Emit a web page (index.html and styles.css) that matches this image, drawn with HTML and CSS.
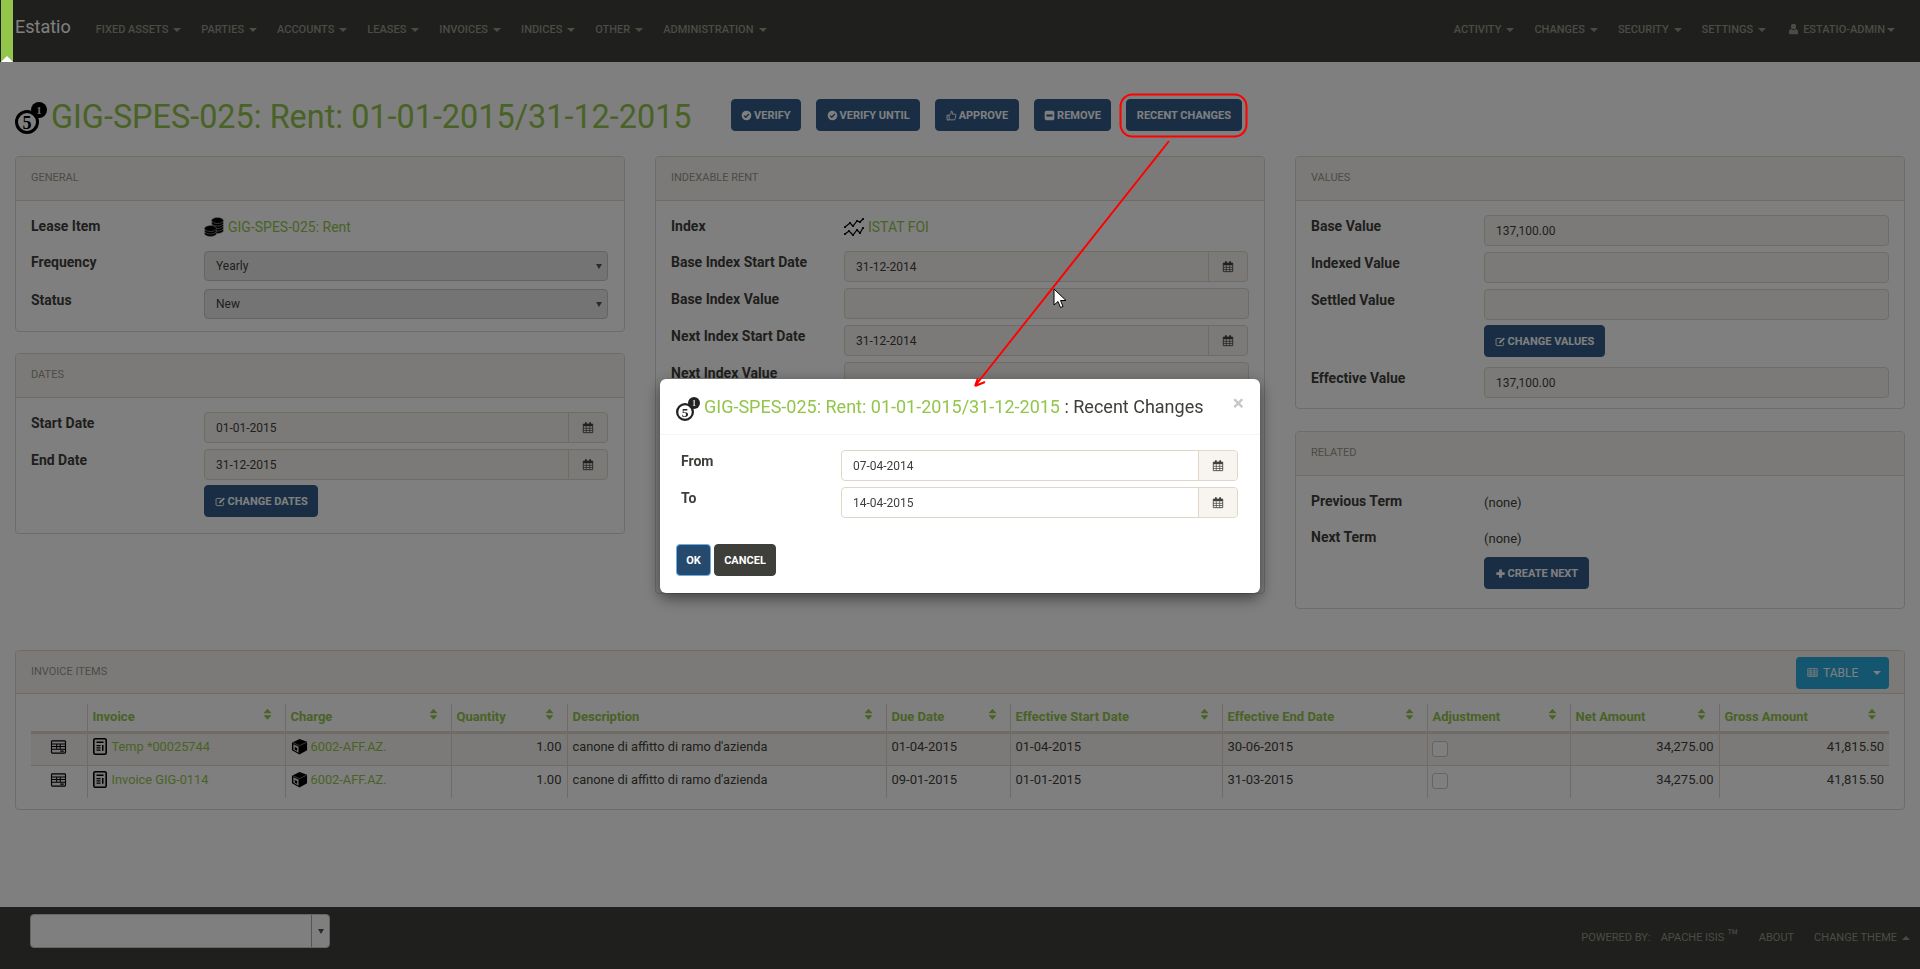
FILE: index.html
```html
<!DOCTYPE html>
<html lang="en">
<head>
    <meta charset="UTF-8">
    <meta name="viewport" content="width=device-width, initial-scale=1.0">
    <title>GIG-SPES-025: Rent: 01-01-2015/31-12-2015</title>
    <link rel="stylesheet" href="styles.css">
</head>
<body>

<svg class="sprite" xmlns="http://www.w3.org/2000/svg">
    <symbol id="i-term" viewBox="0 0 32 32">
        <circle cx="12" cy="20" r="10.500" fill="#fff" fill-opacity=".6" stroke="currentColor" stroke-width="3"/>
        <text x="12" y="26.500" font-family="Liberation Serif, serif" font-weight="700" font-size="18" text-anchor="middle" fill="currentColor">5</text>
        <circle cx="24" cy="8" r="8" fill="currentColor"/>
        <text x="24" y="12" font-family="Liberation Serif, serif" font-weight="700" font-size="11" text-anchor="middle" fill="#ddd">1</text>
    </symbol>
    <symbol id="i-check" viewBox="0 0 16 16">
        <circle cx="8" cy="8" r="7" fill="currentColor"/>
        <path d="M4.500 8.200l2.400 2.400 4.600-4.800" fill="none" stroke="#325d88" stroke-width="2"/>
    </symbol>
    <symbol id="i-thumb" viewBox="0 0 16 16">
        <path d="M1.500 7.500h3v7h-3zM4.500 8l3-3.500V1.500c1.800 0 2.300 1.600 1.600 4.500h4c1 0 1.400.7 1.200 1.600l-1.100 5.300c-.2.8-.7 1.400-1.500 1.400H4.500" fill="none" stroke="currentColor" stroke-width="1.400"/>
    </symbol>
    <symbol id="i-minus" viewBox="0 0 16 16">
        <rect x="1" y="1" width="14" height="14" rx="2.500" fill="currentColor"/>
        <rect x="3.500" y="6.500" width="9" height="3" fill="#325d88"/>
    </symbol>
    <symbol id="i-edit" viewBox="0 0 16 16">
        <path d="M12.500 9.500v3c0 1-.7 1.500-1.500 1.500H3c-.9 0-1.500-.6-1.500-1.500V5c0-.9.6-1.500 1.500-1.500h6" fill="none" stroke="currentColor" stroke-width="1.400"/>
        <path d="M6 8.500l6.500-6.500 2 2L8 10.500H6z" fill="currentColor"/>
    </symbol>
    <symbol id="i-plus" viewBox="0 0 16 16">
        <path d="M6 2h4v4h4v4h-4v4H6v-4H2V6h4z" fill="currentColor"/>
    </symbol>
    <symbol id="i-cal" viewBox="0 0 14 14">
        <path d="M1.500 3h11v10h-11z" fill="none" stroke="currentColor"/>
        <path d="M1.500 3h11v2.500h-11z" fill="currentColor"/>
        <path d="M3.500 1h2v3h-2zM8.500 1h2v3h-2z" fill="currentColor"/>
        <path d="M1.500 8h11M1.500 10.500h11M5 5.500V13M9 5.500V13" fill="none" stroke="currentColor" stroke-width=".8"/>
    </symbol>
    <symbol id="i-user" viewBox="0 0 12 16">
        <circle cx="6" cy="4.500" r="3.500" fill="currentColor"/>
        <path d="M1 15c-.6 0-1-.4-1-1v-2.500C0 9.500 1.500 8 3 8l3 1.500L9 8c1.500 0 3 1.500 3 3.500V14c0 .6-.4 1-1 1z" fill="currentColor"/>
    </symbol>
    <symbol id="i-table" viewBox="0 0 14 14">
        <path d="M1 2h12v10H1zM1 5h12M1 7.500h12M1 10h12M4.800 2v10M9.200 2v10" fill="none" stroke="currentColor"/>
    </symbol>
    <symbol id="i-coins" viewBox="0 0 20 20">
        <g fill="currentColor" stroke="#bbb" stroke-width=".6">
            <ellipse cx="13.500" cy="13.500" rx="6" ry="3"/>
            <ellipse cx="13.500" cy="11" rx="6" ry="3"/>
            <ellipse cx="13.500" cy="8.500" rx="6" ry="3"/>
            <ellipse cx="13.500" cy="6" rx="6" ry="3"/>
            <ellipse cx="13.500" cy="3.500" rx="6" ry="3"/>
            <ellipse cx="6.500" cy="16.500" rx="6" ry="3"/>
            <ellipse cx="6.500" cy="14" rx="6" ry="3"/>
            <ellipse cx="6.500" cy="11.500" rx="6" ry="3"/>
        </g>
    </symbol>
    <symbol id="i-chart" viewBox="0 0 20 18">
        <path d="M1 9l5-4 3 3 4-5 3 1 3-3M1 16l4-3 4 4 4-5 3 3 3-5" fill="none" stroke="currentColor" stroke-width="1.200"/>
        <g fill="currentColor">
            <circle cx="1" cy="9" r="1.100"/><circle cx="6" cy="5" r="1.100"/><circle cx="9" cy="8" r="1.100"/><circle cx="13" cy="3" r="1.100"/><circle cx="16" cy="4" r="1.100"/><circle cx="19" cy="1" r="1.100"/>
            <circle cx="1" cy="16" r="1.100"/><circle cx="5" cy="13" r="1.100"/><circle cx="9" cy="17" r="1.100"/><circle cx="13" cy="12" r="1.100"/><circle cx="16" cy="15" r="1.100"/><circle cx="19" cy="10" r="1.100"/>
        </g>
    </symbol>
    <symbol id="i-invoice" viewBox="0 0 14 17">
        <rect x=".8" y=".8" width="12.400" height="15.400" rx="1.500" fill="#eee" stroke="currentColor" stroke-width="1.600"/>
        <path d="M3.500 3.500h7v1.500h-7zM3.500 7h4v1.200h-4zM3.500 9.300h4v1.200h-4zM3.500 11.600h4v1.200h-4zM9 7h1.500v5.800H9z" fill="currentColor"/>
    </symbol>
    <symbol id="i-box" viewBox="0 0 18 18">
        <path d="M1 5l8-4 8 3v9l-8 4.500L1 13z" fill="currentColor"/>
        <path d="M2.500 6.500L8 9v6.500l-5.500-3z" fill="#ddd"/>
        <path d="M2 5l7 3 7.500-3.500" fill="none" stroke="#aaa" stroke-width=".7"/>
        <path d="M4 9.500l2.500 1.100v3L4 12.500z" fill="currentColor"/>
    </symbol>
    <symbol id="i-list" viewBox="0 0 18 16">
        <rect x="1" y="1" width="16" height="14" rx="1" fill="#eee" stroke="currentColor" stroke-width="1.300"/>
        <path d="M1 4.500h16M1 7.500h16M1 10.500h16M7 4.500v6M11 4.500v6M11 12.700h4" fill="none" stroke="currentColor" stroke-width="1.200"/>
    </symbol>
</svg>

<nav class="navbar">
    <a class="brand">Estatio</a>
    <ul class="nav">
        <li>Fixed Assets<span class="caret"></span></li>
        <li>Parties<span class="caret"></span></li>
        <li>Accounts<span class="caret"></span></li>
        <li>Leases<span class="caret"></span></li>
        <li>Invoices<span class="caret"></span></li>
        <li>Indices<span class="caret"></span></li>
        <li>Other<span class="caret"></span></li>
        <li>Administration<span class="caret"></span></li>
    </ul>
    <ul class="nav nav-right">
        <li>Activity<span class="caret"></span></li>
        <li>Changes<span class="caret"></span></li>
        <li>Security<span class="caret"></span></li>
        <li>Settings<span class="caret"></span></li>
        <li class="nav-user"><svg class="icon-user"><use href="#i-user"/></svg>estatio-admin<span class="caret"></span></li>
    </ul>
</nav>

<main class="page">
    <div class="title-row">
        <h1><svg class="icon-term"><use href="#i-term"/></svg><a>GIG-SPES-025: Rent: 01-01-2015/31-12-2015</a></h1>
        <div class="actions">
            <button class="btn"><svg class="btn-icon"><use href="#i-check"/></svg>Verify</button>
            <button class="btn"><svg class="btn-icon"><use href="#i-check"/></svg>Verify Until</button>
            <button class="btn"><svg class="btn-icon"><use href="#i-thumb"/></svg>Approve</button>
            <button class="btn"><svg class="btn-icon"><use href="#i-minus"/></svg>Remove</button>
            <button class="btn">Recent Changes</button>
        </div>
    </div>

    <div class="columns">
        <div class="col">
            <section class="panel">
                <div class="panel-heading">General</div>
                <div class="panel-body">
                    <div class="row row-short">
                        <label>Lease Item</label>
                        <a class="ref"><svg class="icon-ref"><use href="#i-coins"/></svg>GIG-SPES-025: Rent</a>
                    </div>
                    <div class="row row-select">
                        <label>Frequency</label>
                        <div class="select">Yearly<span class="select-arrow"></span></div>
                    </div>
                    <div class="row row-select">
                        <label>Status</label>
                        <div class="select">New<span class="select-arrow"></span></div>
                    </div>
                </div>
            </section>
            <section class="panel panel-dates">
                <div class="panel-heading">Dates</div>
                <div class="panel-body body-dates">
                    <div class="row">
                        <label>Start Date</label>
                        <div class="input date"><span class="value">01-01-2015</span><span class="addon"><svg class="icon-cal"><use href="#i-cal"/></svg></span></div>
                    </div>
                    <div class="row">
                        <label>End Date</label>
                        <div class="input date"><span class="value">31-12-2015</span><span class="addon"><svg class="icon-cal"><use href="#i-cal"/></svg></span></div>
                    </div>
                    <div class="row row-up">
                        <span></span>
                        <div><button class="btn"><svg class="btn-icon"><use href="#i-edit"/></svg>Change Dates</button></div>
                    </div>
                </div>
            </section>
        </div>

        <div class="col">
            <section class="panel panel-tall">
                <div class="panel-heading">Indexable Rent</div>
                <div class="panel-body">
                    <div class="row row-short">
                        <label>Index</label>
                        <a class="ref"><svg class="icon-ref"><use href="#i-chart"/></svg>ISTAT FOI</a>
                    </div>
                    <div class="row">
                        <label>Base Index Start Date</label>
                        <div class="input date"><span class="value">31-12-2014</span><span class="addon"><svg class="icon-cal"><use href="#i-cal"/></svg></span></div>
                    </div>
                    <div class="row">
                        <label>Base Index Value</label>
                        <div class="input"></div>
                    </div>
                    <div class="row">
                        <label>Next Index Start Date</label>
                        <div class="input date"><span class="value">31-12-2014</span><span class="addon"><svg class="icon-cal"><use href="#i-cal"/></svg></span></div>
                    </div>
                    <div class="row">
                        <label>Next Index Value</label>
                        <div class="input"></div>
                    </div>
                </div>
            </section>
        </div>

        <div class="col">
            <section class="panel">
                <div class="panel-heading">Values</div>
                <div class="panel-body">
                    <div class="row">
                        <label>Base Value</label>
                        <div class="input"><span class="value">137,100.00</span></div>
                    </div>
                    <div class="row">
                        <label>Indexed Value</label>
                        <div class="input"></div>
                    </div>
                    <div class="row">
                        <label>Settled Value</label>
                        <div class="input"></div>
                    </div>
                    <div class="row row-btn">
                        <span></span>
                        <div><button class="btn"><svg class="btn-icon"><use href="#i-edit"/></svg>Change Values</button></div>
                    </div>
                    <div class="row">
                        <label>Effective Value</label>
                        <div class="input"><span class="value">137,100.00</span></div>
                    </div>
                </div>
            </section>
            <section class="panel">
                <div class="panel-heading">Related</div>
                <div class="panel-body body-related">
                    <div class="row row-text">
                        <label>Previous Term</label>
                        <span class="none">(none)</span>
                    </div>
                    <div class="row row-text row-text-next">
                        <label>Next Term</label>
                        <span class="none">(none)</span>
                    </div>
                    <div class="row row-up">
                        <span></span>
                        <div><button class="btn"><svg class="btn-icon"><use href="#i-plus"/></svg>Create Next</button></div>
                    </div>
                </div>
            </section>
        </div>
    </div>

    <section class="panel panel-items">
        <div class="panel-heading">
            Invoice Items
            <div class="btn-group">
                <button class="btn-info"><svg class="icon-table"><use href="#i-table"/></svg>Table</button>
                <span class="caret"></span>
            </div>
        </div>
        <div class="table-wrap">
            <table>
                <colgroup>
                    <col class="c-view"><col class="c-invoice"><col class="c-charge"><col class="c-qty"><col class="c-desc"><col class="c-due">
                    <col class="c-start"><col class="c-end"><col class="c-adj"><col class="c-net"><col class="c-gross">
                </colgroup>
                <thead>
                <tr>
                    <th></th>
                    <th><div class="th-in">Invoice<span class="sort"></span></div></th>
                    <th><div class="th-in">Charge<span class="sort"></span></div></th>
                    <th><div class="th-in">Quantity<span class="sort"></span></div></th>
                    <th><div class="th-in">Description<span class="sort"></span></div></th>
                    <th><div class="th-in">Due Date<span class="sort"></span></div></th>
                    <th><div class="th-in">Effective Start Date<span class="sort"></span></div></th>
                    <th><div class="th-in">Effective End Date<span class="sort"></span></div></th>
                    <th><div class="th-in">Adjustment<span class="sort"></span></div></th>
                    <th><div class="th-in">Net Amount<span class="sort"></span></div></th>
                    <th><div class="th-in">Gross Amount<span class="sort"></span></div></th>
                </tr>
                </thead>
                <tbody>
                <tr class="odd">
                    <td class="center"><svg class="icon-list"><use href="#i-list"/></svg></td>
                    <td><a class="ref-cell"><svg class="icon-invoice"><use href="#i-invoice"/></svg>Temp *00025744</a></td>
                    <td><a class="ref-cell"><svg class="icon-box"><use href="#i-box"/></svg>6002-AFF.AZ.</a></td>
                    <td class="num">1.00</td>
                    <td class="text">canone di affitto di ramo d'azienda</td>
                    <td>01-04-2015</td>
                    <td>01-04-2015</td>
                    <td>30-06-2015</td>
                    <td><span class="check"></span></td>
                    <td class="num">34,275.00</td>
                    <td class="num">41,815.50</td>
                </tr>
                <tr>
                    <td class="center"><svg class="icon-list"><use href="#i-list"/></svg></td>
                    <td><a class="ref-cell"><svg class="icon-invoice"><use href="#i-invoice"/></svg>Invoice GIG-0114</a></td>
                    <td><a class="ref-cell"><svg class="icon-box"><use href="#i-box"/></svg>6002-AFF.AZ.</a></td>
                    <td class="num">1.00</td>
                    <td class="text">canone di affitto di ramo d'azienda</td>
                    <td>09-01-2015</td>
                    <td>01-01-2015</td>
                    <td>31-03-2015</td>
                    <td><span class="check"></span></td>
                    <td class="num">34,275.00</td>
                    <td class="num">41,815.50</td>
                </tr>
                </tbody>
            </table>
        </div>
    </section>
</main>

<footer class="footer">
    <div class="footer-select"><span class="footer-arrow"><span class="select-arrow"></span></span></div>
    <div class="footer-links">
        <span class="powered">Powered by:</span>
        <span>Apache Isis <span class="tm">™</span></span>
        <span>About</span>
        <span>Change Theme<span class="caret caret-up"></span></span>
    </div>
</footer>

<div class="backdrop">
    <div class="modal">
        <div class="modal-header">
            <svg class="icon-term-sm"><use href="#i-term"/></svg>
            <span class="modal-title"><a>GIG-SPES-025: Rent: 01-01-2015/31-12-2015</a> : Recent Changes</span>
            <span class="close">×</span>
        </div>
        <div class="modal-body">
            <div class="row row-modal">
                <label>From</label>
                <div class="input date modal-input"><span class="value">07-04-2014</span><span class="addon"><svg class="icon-cal"><use href="#i-cal"/></svg></span></div>
            </div>
            <div class="row row-modal">
                <label>To</label>
                <div class="input date modal-input"><span class="value">14-04-2015</span><span class="addon"><svg class="icon-cal"><use href="#i-cal"/></svg></span></div>
            </div>
        </div>
        <div class="modal-footer">
            <button class="btn btn-ok">OK</button>
            <button class="btn btn-cancel">Cancel</button>
        </div>
    </div>
</div>

<div class="strip"><span class="strip-arrow"></span></div>

<!-- annotation drawn on top of the screenshot -->
<svg class="annotation" viewBox="0 0 1920 969" xmlns="http://www.w3.org/2000/svg">
    <rect x="1120.500" y="94.500" width="126" height="42" rx="12" fill="none" stroke="#f00" stroke-width="2"/>
    <path d="M1169 141L975 386M975 386l3-8M975 386l10-4" fill="none" stroke="#f00" stroke-width="2"/>
    <path d="M1054 289v16l4-3.500 2.500 6 2.500-1-2.500-6h5.500z" fill="#fff" stroke="#000" stroke-width="1"/>
</svg>

</body>
</html>
```

FILE: styles.css
```css
* {
    box-sizing: border-box;
}

html, body {
    height: 100%;
}

body {
    font-family: Roboto, "Liberation Sans", sans-serif;
    font-size: 13px;
    color: #3e3f3a;
    background-color: #ffffff;
    margin: 0;
    display: flex;
    flex-direction: column;
    overflow: hidden;
}

a {
    color: #93c54b;
}

.sprite {
    display: none;
}

/* top bar */
.navbar {
    height: 62px;
    flex: none;
    background-color: #3e3f3a;
    display: flex;
    align-items: flex-start;
    padding: 0 25px 0 15px;
}

.brand {
    color: #ffffff;
    font-size: 18px;
    line-height: 54px;
    margin-right: 25px;
}

.nav {
    list-style: none;
    margin: 0;
    padding: 0;
    display: flex;
    gap: 20px;
    color: #98978b;
    font-size: 11px;
    font-weight: 500;
    text-transform: uppercase;
    line-height: 59px;
}

.nav-right {
    margin-left: auto;
}

.nav-user {
    margin-left: 3px;
    white-space: nowrap;
}

.nav-user .caret {
    margin-left: 2px;
}

.icon-user {
    width: 9px;
    height: 12px;
    margin-right: 5px;
    vertical-align: -2px;
}

.caret {
    display: inline-block;
    border-top: 4px solid currentColor;
    border-left: 4px solid transparent;
    border-right: 4px solid transparent;
    margin-left: 5px;
    vertical-align: 1px;
}

.caret-up {
    border-top: none;
    border-bottom: 4px solid currentColor;
}

/* title */
.page {
    flex: 1;
}

.title-row {
    display: flex;
    align-items: flex-start;
    padding: 37px 15px 0;
    height: 94px;
}

h1 {
    margin: 0 39px 0 0;
    font-size: 32.4px;
    font-weight: 400;
    line-height: 36px;
    display: flex;
    align-items: center;
    white-space: nowrap;
}

.icon-term {
    width: 32px;
    height: 32px;
    margin: 1px 4px 0 0;
    color: #000;
    flex: none;
}

.actions {
    display: flex;
    gap: 15px;
}

.btn {
    height: 32px;
    padding: 0 9.5px;
    border: 1px solid #325d88;
    border-radius: 4px;
    background-color: #325d88;
    color: #ffffff;
    font-family: inherit;
    font-size: 11px;
    font-weight: 700;
    text-transform: uppercase;
    white-space: nowrap;
}

.btn-icon {
    width: 11px;
    height: 11px;
    margin-right: 2px;
    vertical-align: -2px;
}

/* columns and panels */
.columns {
    display: grid;
    grid-template-columns: repeat(3, 1fr);
    gap: 30px;
    padding: 0 15px;
    height: 494px;
}

.col {
    display: flex;
    flex-direction: column;
    gap: 22px;
}

.panel {
    border: 1px solid #dfd7ca;
    border-radius: 4px;
    background-color: #ffffff;
}

.panel-tall {
    height: 438px;
}

.panel-dates {
    margin-top: -1px;
}

.panel-heading {
    height: 44px;
    padding: 0 15px;
    background-color: #f8f5f0;
    border-bottom: 1px solid #dfd7ca;
    color: #98978b;
    font-size: 11px;
    text-transform: uppercase;
    line-height: 41px;
    border-radius: 3px 3px 0 0;
}

.panel-body {
    padding: 14px 15px 4px;
}

.body-dates {
    padding: 14px 15px 10px;
}

.body-related {
    padding-bottom: 13px;
}

.row {
    display: grid;
    grid-template-columns: 173px 1fr;
    margin-bottom: 6px;
    min-height: 31px;
}

.row label {
    font-size: 14px;
    font-weight: 700;
    line-height: 20px;
    padding-top: 1px;
    color: #3e3f3a;
}

.row-short {
    min-height: 30px;
}

.row-select {
    margin-bottom: 8px;
    min-height: 30px;
}

.row-btn {
    margin-top: -1px;
    margin-bottom: 10px;
}

.row-up {
    margin-top: -1px;
}

.row-text {
    min-height: 36px;
    margin-bottom: 0;
}

.row-text-next {
    min-height: 32px;
}

.none {
    font-size: 13px;
    line-height: 26px;
}

.ref {
    font-size: 14px;
    line-height: 24px;
    white-space: nowrap;
}

.icon-ref {
    width: 20px;
    height: 20px;
    color: #000;
    margin-right: 4px;
    vertical-align: -5px;
}

.input {
    height: 31px;
    border: 1px solid #dfd7ca;
    border-radius: 4px;
    background-color: #f8f5f0;
    display: flex;
    align-items: center;
    font-size: 12px;
}

.date {
    margin-right: 1px;
}

.value {
    flex: 1;
    padding-left: 11px;
}

.addon {
    width: 39px;
    height: 100%;
    border-left: 1px solid #dfd7ca;
    display: flex;
    align-items: center;
    justify-content: center;
}

.icon-cal {
    width: 12px;
    height: 13px;
    color: #3e3f3a;
}

.select {
    height: 30px;
    margin-right: 1px;
    border: 1px solid #cfc9bf;
    border-radius: 4px;
    background-color: #e8e8e8;
    display: flex;
    align-items: center;
    justify-content: space-between;
    padding: 0 5px 0 11px;
    font-size: 12px;
}

.select-arrow {
    border-top: 5px solid #555;
    border-left: 3px solid transparent;
    border-right: 3px solid transparent;
}

/* invoice items table */
.panel-items {
    margin: 0 15px;
    height: 160px;
}

.panel-items .panel-heading {
    position: relative;
    height: 43px;
}

.btn-group {
    position: absolute;
    top: 6px;
    right: 15px;
    width: 93px;
    height: 32px;
    background-color: #29abe0;
    border-radius: 4px;
    color: #ffffff;
    display: flex;
    align-items: center;
    justify-content: space-between;
    padding-right: 8px;
}

.btn-info {
    background: none;
    border: 0;
    color: inherit;
    font-family: inherit;
    font-size: 12px;
    text-transform: uppercase;
    padding: 0 0 0 11px;
}

.icon-table {
    width: 11px;
    height: 11px;
    margin-right: 5px;
    vertical-align: -1px;
}

.table-wrap {
    padding: 10px 15px 0;
}

table {
    width: 1858px;
    table-layout: fixed;
    border-collapse: collapse;
}

.c-view { width: 56px; }
.c-invoice { width: 198px; }
.c-charge { width: 166px; }
.c-qty { width: 116px; }
.c-desc { width: 319px; }
.c-due { width: 124px; }
.c-start { width: 212px; }
.c-end { width: 205px; }
.c-adj { width: 143px; }
.c-net { width: 149px; }
.c-gross { width: 170px; }

th {
    height: 28px;
    padding: 0 5px 2px;
    border-left: 1px solid #dfd7ca;
    border-bottom: 3px solid #dfd7ca;
    color: #93c54b;
    font-size: 13px;
    font-weight: 700;
    text-align: left;
}

th:first-child, td:first-child {
    border-left: 0;
}

.th-in {
    display: flex;
    justify-content: space-between;
    align-items: center;
    padding-right: 8px;
}

.sort {
    width: 8px;
    height: 11px;
    margin-top: -4px;
    background-color: #93c54b;
    clip-path: polygon(50% 0, 100% 40%, 0 40%, 0 60%, 100% 60%, 50% 100%, 0 60%, 0 40%);
}

td {
    height: 33px;
    padding: 0 5px 5px;
    border-left: 1px solid #dfd7ca;
    font-size: 13px;
    white-space: nowrap;
}

tr.odd td {
    background-color: #f8f5f0;
    border-bottom: 1px solid #dfd7ca;
}

.ref-cell, .text {
    font-size: 12.8px;
}

.center {
    text-align: center;
}

.num {
    text-align: right;
}

.icon-list {
    width: 17px;
    height: 14px;
    color: #000;
    vertical-align: middle;
}

.icon-invoice {
    width: 14px;
    height: 17px;
    color: #000;
    margin-right: 5px;
    vertical-align: -4px;
}

.icon-box {
    width: 17px;
    height: 17px;
    color: #000;
    margin-right: 3px;
    vertical-align: -4px;
}

.check {
    display: block;
    width: 16px;
    height: 16px;
    margin: 4px 0 0 -1px;
    border: 1px solid #c8c8c8;
    border-radius: 3px;
    background-color: #ffffff;
}

/* footer */
.footer {
    height: 62px;
    flex: none;
    background-color: #3e3f3a;
    display: flex;
    align-items: flex-start;
    justify-content: space-between;
    padding: 7px 10px 0 30px;
}

.footer-select {
    width: 300px;
    height: 34px;
    background-color: #ffffff;
    border: 1px solid #ccc;
    border-radius: 4px;
    display: flex;
    justify-content: flex-end;
}

.footer-arrow {
    width: 18px;
    border-left: 1px solid #aaa;
    display: flex;
    align-items: center;
    justify-content: center;
}

.footer-links {
    display: flex;
    gap: 20px;
    color: #98978b;
    font-size: 11px;
    text-transform: uppercase;
    line-height: 48px;
}

.powered {
    margin-right: -10px;
}

.tm {
    font-size: 19px;
    line-height: 10px;
    vertical-align: -2px;
}

/* modal over the page */
.backdrop {
    position: fixed;
    inset: 0;
    background-color: rgba(0, 0, 0, 0.5);
    display: flex;
    justify-content: center;
    align-items: flex-start;
    padding-top: 379px;
}

.modal {
    width: 600px;
    height: 214px;
    background-color: #ffffff;
    border-radius: 6px;
    box-shadow: 0 5px 15px rgba(0, 0, 0, 0.5);
}

.modal-header {
    height: 56px;
    border-bottom: 1px solid #f8f5f0;
    display: flex;
    align-items: center;
    padding: 0 16px;
    position: relative;
}

.icon-term-sm {
    width: 24px;
    height: 24px;
    color: #222;
    margin: 4px 4px 0 0;
    flex: none;
}

.modal-title {
    font-size: 18px;
    white-space: nowrap;
}

.close {
    position: absolute;
    right: 16px;
    top: 12px;
    font-size: 21px;
    font-weight: 700;
    line-height: 24px;
    color: #c8c8c8;
}

.modal-body {
    padding: 15px 22px 0 21px;
}

.row-modal {
    grid-template-columns: 160px 1fr;
}

.row-modal .date {
    margin-right: 0;
}

.modal-input {
    background-color: #ffffff;
}

.modal-input .value {
    padding-top: 1px;
}

.modal-input .addon {
    background-color: #f8f5f0;
    border-radius: 0 3px 3px 0;
}

.modal-footer {
    padding: 20px 16px 0;
    display: flex;
    gap: 3px;
}

.btn-ok {
    width: 35px;
    padding: 0;
    background-color: #264a6e;
    border-color: #66afe9;
}

.btn-cancel {
    width: 62px;
    padding: 0;
    background-color: #3e3f3a;
    border-color: #3e3f3a;
}

/* green tab stays above the backdrop */
.strip {
    position: fixed;
    left: 1px;
    top: 0;
    width: 12px;
    height: 62px;
    background-color: #93c54b;
}

.strip-arrow {
    position: absolute;
    left: 0;
    bottom: 0;
    border-bottom: 6px solid #ffffff;
    border-left: 6px solid transparent;
    border-right: 6px solid transparent;
}

.annotation {
    position: fixed;
    inset: 0;
    width: 1920px;
    height: 969px;
    pointer-events: none;
}
```
